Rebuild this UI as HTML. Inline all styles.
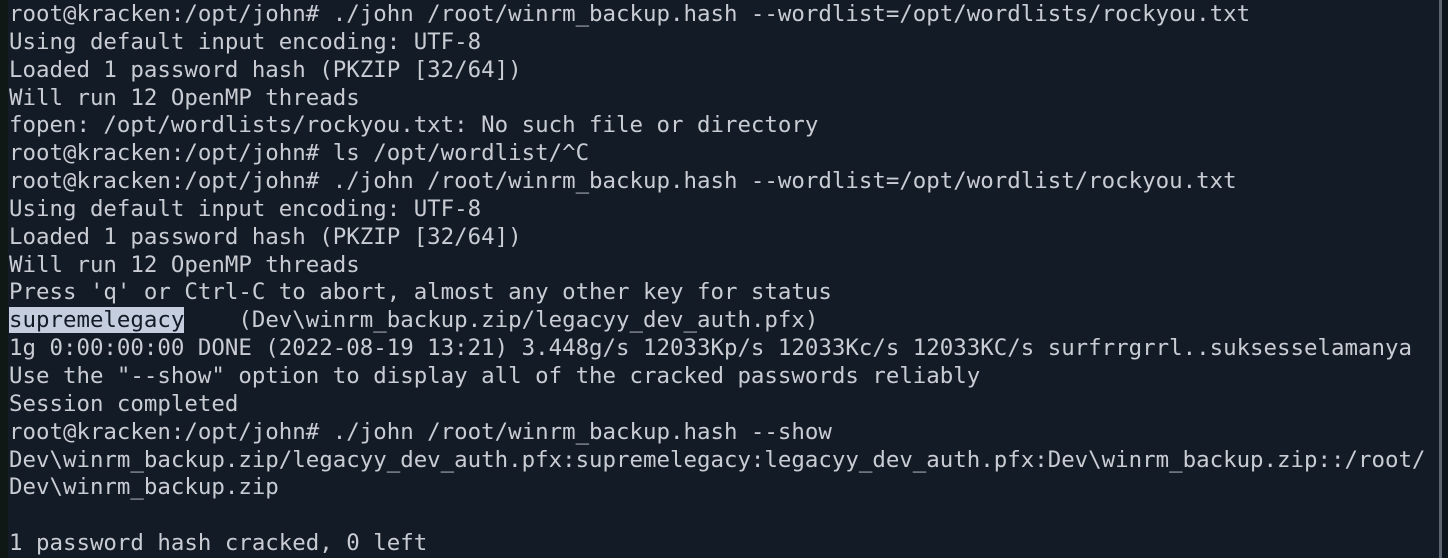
<!DOCTYPE html>
<html><head><meta charset="utf-8"><style>
html,body{margin:0;padding:0;width:1448px;height:558px;overflow:hidden;background:#131b27;}
.l{position:absolute;left:0;top:0;width:8px;height:558px;background:#0f1814;}
.sb{position:absolute;left:1439px;top:0;width:3px;height:558px;background:#5c6470;}
.r{position:absolute;left:1442px;top:0;width:6px;height:558px;background:#0e141c;}
pre{position:absolute;left:9px;top:1px;margin:0;font-family:"DejaVu Sans Mono","Liberation Mono",monospace;font-size:22.42px;line-height:27.85px;color:#c9ccd3;}
.sel{background:#c5cede;color:#131b27;}
</style></head><body>
<div class="l"></div><div class="sb"></div><div class="r"></div>
<pre>root@kracken:/opt/john# ./john /root/winrm_backup.hash --wordlist=/opt/wordlists/rockyou.txt
Using default input encoding: UTF-8
Loaded 1 password hash (PKZIP [32/64])
Will run 12 OpenMP threads
fopen: /opt/wordlists/rockyou.txt: No such file or directory
root@kracken:/opt/john# ls /opt/wordlist/^C
root@kracken:/opt/john# ./john /root/winrm_backup.hash --wordlist=/opt/wordlist/rockyou.txt
Using default input encoding: UTF-8
Loaded 1 password hash (PKZIP [32/64])
Will run 12 OpenMP threads
Press 'q' or Ctrl-C to abort, almost any other key for status
<span class="sel">supremelegacy</span>    (Dev\winrm_backup.zip/legacyy_dev_auth.pfx)
1g 0:00:00:00 DONE (2022-08-19 13:21) 3.448g/s 12033Kp/s 12033Kc/s 12033KC/s surfrrgrrl..suksesselamanya
Use the "--show" option to display all of the cracked passwords reliably
Session completed
root@kracken:/opt/john# ./john /root/winrm_backup.hash --show
Dev\winrm_backup.zip/legacyy_dev_auth.pfx:supremelegacy:legacyy_dev_auth.pfx:Dev\winrm_backup.zip::/root/
Dev\winrm_backup.zip

1 password hash cracked, 0 left</pre>
</body></html>
